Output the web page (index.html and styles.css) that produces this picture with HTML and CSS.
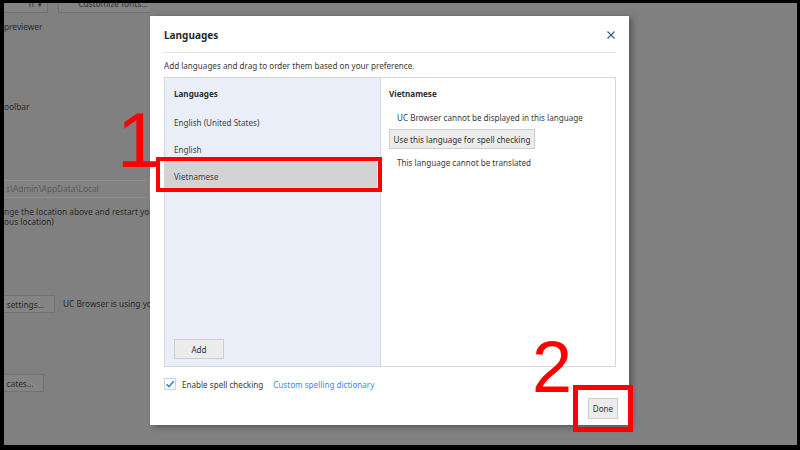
FILE: index.html
```html
<!DOCTYPE html>
<html lang="en">
<head>
    <meta charset="UTF-8">
    <meta name="viewport" content="width=device-width, initial-scale=1.0">
    <title>Languages</title>
    <link rel="stylesheet" href="styles.css">
</head>
<body>
    <div class="screen">
        <!-- Ajustes de fondo, atenuados detrás del diálogo -->
        <div class="backdrop">
            <div class="bd-row bd-top">
                <span class="bd-select">n <span class="bd-caret">&#9662;</span></span>
                <span class="bd-btn bd-fonts">Customize fonts...</span>
            </div>
            <p class="bd-text bd-preview">previewer</p>
            <p class="bd-text bd-toolbar">oolbar</p>
            <div class="bd-input">s\Admin\AppData\Local</div>
            <p class="bd-text bd-note">nge the location above and restart you<br>ous location)</p>
            <div class="bd-row bd-proxy">
                <span class="bd-btn bd-settings">settings...</span>
                <span class="bd-text">UC Browser is using yo</span>
            </div>
            <div class="bd-row bd-certs">
                <span class="bd-btn bd-cert-btn">cates...</span>
            </div>
        </div>

        <!-- Diálogo de idiomas -->
        <div class="dialog">
            <div class="dlg-head">
                <span class="dlg-title">Languages</span>
                <svg class="dlg-close" width="8" height="8" viewBox="0 0 8 8"><path d="M0.5 0.5L7.5 7.5M7.5 0.5L0.5 7.5"/></svg>
            </div>
            <p class="dlg-sub">Add languages and drag to order them based on your preference.</p>
            <div class="lang-panel">
                <div class="lang-list">
                    <div class="pane-head">Languages</div>
                    <div class="lang-item">English (United States)</div>
                    <div class="lang-item">English</div>
                    <div class="lang-item selected">Vietnamese</div>
                    <button class="btn add-btn">Add</button>
                </div>
                <div class="lang-detail">
                    <div class="pane-head">Vietnamese</div>
                    <p class="detail-note">UC Browser cannot be displayed in this language</p>
                    <button class="btn spell-btn">Use this language for spell checking</button>
                    <p class="detail-note second">This language cannot be translated</p>
                </div>
            </div>
            <div class="spell-row">
                <span class="check">
                    <svg width="10" height="10" viewBox="0 0 10 10"><path d="M1.5 5.2L4 7.8L8.8 2"/></svg>
                </span>
                <span class="spell-label">Enable spell checking</span>
                <a class="link">Custom spelling dictionary</a>
            </div>
            <div class="dlg-foot">
                <button class="btn done-btn">Done</button>
            </div>
        </div>

        <!-- Marcas rojas del tutorial -->
        <span class="mark mark-1">1</span>
        <span class="box box-1"></span>
        <span class="mark mark-2">2</span>
        <span class="box box-2"></span>
    </div>
</body>
</html>
```

FILE: styles.css
```css
body {
    margin: 0;
    background-color: #000;
    font-family: 'Noto Sans', 'Open Sans', sans-serif;
}

.screen {
    position: relative;
    width: 793px;
    height: 442px;
    margin: 3px 3px 0 4px;
    background-color: #808080;
    overflow: hidden;
}

/* Página de ajustes detrás del diálogo */
.backdrop {
    width: 146px;
    overflow: hidden;
    white-space: nowrap;
    font-size: 8.3px;
    color: #2b2b2b;
}

.bd-row {
    display: flex;
    align-items: center;
}

.bd-text {
    margin: 0;
    line-height: 12px;
}

.bd-btn {
    flex-shrink: 0;
    display: flex;
    align-items: center;
    justify-content: center;
    box-sizing: border-box;
    height: 18px;
    background-color: #848484;
    border: 1px solid #727272;
}

.bd-top {
    margin-top: -6px;
    align-items: flex-start;
}

.bd-top .bd-btn {
    height: 16px;
    padding-bottom: 3px;
}

.bd-select {
    flex-shrink: 0;
    box-sizing: border-box;
    width: 54px;
    height: 16px;
    margin-left: -10px;
    padding-right: 5px;
    line-height: 11px;
    text-align: right;
    background-color: #848484;
    border: 1px solid #727272;
}

.bd-caret {
    font-size: 7px;
    margin-left: 2px;
}

.bd-fonts {
    width: 110px;
    margin-left: 10px;
}

.bd-preview {
    margin-top: 8px;
}

.bd-toolbar {
    margin-top: 68px;
}

.bd-input {
    box-sizing: border-box;
    height: 18px;
    margin-top: 67px;
    padding-left: 2px;
    line-height: 16px;
    color: #5c5c5c;
    background-color: #828282;
    border: 1px solid #8d8d8d;
    border-left: none;
}

.bd-note {
    margin-top: 9px;
    line-height: 10px;
}

.bd-proxy {
    margin-top: 68px;
    gap: 8px;
}

.bd-settings {
    width: 59px;
    margin-left: -8px;
}

.bd-certs {
    margin-top: 61px;
}

.bd-cert-btn {
    width: 48px;
    margin-left: -8px;
}

/* Diálogo */
.dialog {
    position: absolute;
    left: 146px;
    top: 13px;
    width: 479px;
    height: 409px;
    box-sizing: border-box;
    padding: 0 13px 0 14px;
    display: flex;
    flex-direction: column;
    background-color: #fff;
    box-shadow: 3px 2px 6px rgba(0, 0, 0, 0.35);
    font-size: 8.1px;
    color: #3a3a3a;
}

.dlg-head {
    height: 37px;
    padding-top: 2px;
    box-sizing: border-box;
    display: flex;
    align-items: center;
    justify-content: space-between;
    border-bottom: 1px solid #e4e4e4;
}

.dlg-title {
    font-size: 10px;
    font-weight: bold;
    color: #2a2a2a;
}

.dlg-close {
    margin-right: 1px;
    stroke: #4b5f82;
    stroke-width: 1.3;
    fill: none;
}

.dlg-sub {
    margin: 7px 0 5px;
    line-height: 12px;
}

.lang-panel {
    display: flex;
    height: 290px;
    box-sizing: border-box;
    border: 1px solid #d7d7d7;
}

.lang-list {
    width: 215px;
    display: flex;
    flex-direction: column;
    background-color: #e9eef9;
    border-right: 1px solid #d2d7e1;
}

.lang-detail {
    flex: 1;
    display: flex;
    flex-direction: column;
}

.pane-head {
    box-sizing: border-box;
    height: 29px;
    padding: 2px 0 0 9px;
    line-height: 27px;
    font-weight: bold;
    color: #2e2e2e;
}

.lang-detail .pane-head {
    padding-left: 8px;
}

.lang-item {
    box-sizing: border-box;
    height: 27px;
    padding: 5px 0 0 9px;
    line-height: 22px;
    color: #444;
}

.lang-item.selected {
    margin-right: 3px;
    background-color: #d3d3d3;
}

.btn {
    padding: 0;
    font-family: inherit;
    font-size: 8.1px;
    color: #333;
    background-color: #ececec;
    border: 1px solid #cecece;
    border-radius: 0;
}

.add-btn {
    width: 50px;
    height: 20px;
    margin: auto 0 7px 9px;
}

.detail-note {
    margin: 0;
    padding: 4px 0 0 16px;
    line-height: 14px;
}

.detail-note.second {
    margin-top: 3px;
}

.spell-btn {
    align-self: flex-start;
    width: 146px;
    height: 20px;
    margin: 4px 0 0 8px;
}

.spell-row {
    display: flex;
    align-items: center;
    height: 12px;
    margin-top: 11px;
}

.check {
    display: flex;
    align-items: center;
    justify-content: center;
    box-sizing: border-box;
    width: 12px;
    height: 12px;
    border: 1px solid #cdd3db;
}

.check svg {
    stroke: #2f7fd6;
    stroke-width: 1.4;
    fill: none;
}

.spell-label {
    margin-left: 6px;
}

.link {
    margin-left: 10px;
    color: #3a8be0;
}

.dlg-foot {
    display: flex;
    justify-content: flex-end;
    margin: 8px -2px 0 0;
}

.done-btn {
    width: 30px;
    height: 21px;
}

/* Anotaciones rojas */
.mark {
    position: absolute;
    font-family: 'Liberation Sans', Arial, sans-serif;
    line-height: 1;
    color: #f00;
}

.mark-1 {
    left: 113px;
    top: 99px;
    font-size: 77px;
}

.mark-2 {
    left: 528px;
    top: 328px;
    font-size: 72px;
}

.box {
    position: absolute;
    box-sizing: border-box;
    border: 4px solid #f00;
}

.box-1 {
    left: 152px;
    top: 154px;
    width: 226px;
    height: 35px;
}

.box-2 {
    left: 569px;
    top: 382px;
    width: 60px;
    height: 47px;
    border-width: 5px;
}
```
